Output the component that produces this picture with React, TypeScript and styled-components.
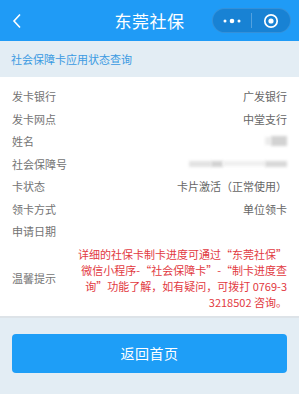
import React from 'react';
import styled, { createGlobalStyle } from 'styled-components';

const GlobalStyle = createGlobalStyle`
  html, body {
    margin: 0;
    padding: 0;
    background: #e3edf4;
    font-family: "Noto Sans CJK SC", "Noto Sans", sans-serif;
  }
`;

const Page = styled.div`
  width: 299px;
  min-height: 394px;
  background: #e3edf4;
`;

const NavBar = styled.div`
  height: 41px;
  background: #1f9bf6;
  display: grid;
  grid-template-columns: 1fr auto 1fr;
  align-items: center;
`;

const BackButton = styled.div`
  display: flex;
  align-items: center;
  padding-left: 12px;
`;

const NavTitle = styled.div`
  color: #fff;
  font-size: 17px;
  letter-spacing: 0.5px;
`;

const Capsule = styled.div`
  justify-self: end;
  margin-right: 8px;
  width: 79px;
  height: 25px;
  box-sizing: border-box;
  border-radius: 13px;
  background: rgba(0, 40, 90, 0.22);
  border: 1px solid rgba(255, 255, 255, 0.12);
  display: flex;
  align-items: center;
`;

const CapsuleHalf = styled.div`
  flex: 1;
  display: flex;
  align-items: center;
  justify-content: center;
`;

const CapsuleDivider = styled.div`
  width: 1px;
  height: 15px;
  background: rgba(255, 255, 255, 0.25);
`;

const SectionTitle = styled.div`
  height: 36px;
  display: flex;
  align-items: center;
  padding-left: 11px;
  color: #3a9ae2;
  font-size: 11px;
`;

const Card = styled.div`
  background: #fff;
  padding: 8px 12px 6px;
  border-bottom: 2px solid #dde3e8;
`;

const Row = styled.div<{ $tall?: boolean }>`
  display: flex;
  justify-content: space-between;
  align-items: center;
  min-height: 22.5px;
  padding-top: ${({ $tall }) => ($tall ? '3px' : '0')};
`;

const Label = styled.div`
  color: #737373;
  font-size: 11px;
  white-space: nowrap;
`;

const Value = styled.div`
  color: #666;
  font-size: 11px;
  text-align: right;
  white-space: nowrap;
`;

const Tip = styled.div`
  color: #e23a3f;
  font-size: 11px;
  line-height: 16px;
  text-align: right;
  white-space: nowrap;
`;

const Blur = styled.span<{ $w: number; $h: number; $shade: string }>`
  display: inline-block;
  width: ${({ $w }) => $w}px;
  height: ${({ $h }) => $h}px;
  background: ${({ $shade }) => $shade};
  filter: blur(1.5px);
`;

const BlurGroup = styled.div`
  display: flex;
  align-items: center;
`;

const HomeButton = styled.button`
  display: block;
  margin: 16px 12px 0;
  width: calc(100% - 24px);
  height: 39px;
  border: none;
  border-radius: 4px;
  background: #1e9ef7;
  color: #fff;
  font-family: inherit;
  font-size: 14px;
  letter-spacing: 0.5px;
`;

const rows: [string, React.ReactNode][] = [
  ['发卡银行', '广发银行'],
  ['发卡网点', '中堂支行'],
  [
    '姓名',
    <BlurGroup key="n">
      <Blur $w={6} $h={8} $shade="#ececec" />
      <Blur $w={16} $h={10} $shade="#d2d2d2" />
    </BlurGroup>,
  ],
  [
    '社会保障号',
    <BlurGroup key="s">
      <Blur $w={22} $h={6} $shade="#e2e2e2" />
      <Blur $w={12} $h={6} $shade="#d2d2d2" />
      <Blur $w={42} $h={5} $shade="#efefef" />
      <Blur $w={22} $h={6} $shade="#d8d8d8" />
    </BlurGroup>,
  ],
  ['卡状态', '卡片激活（正常使用）'],
  ['领卡方式', '单位领卡'],
  ['申请日期', ''],
];

const App = () => (
  <Page>
    <GlobalStyle />
    <NavBar>
      <BackButton>
        <svg width="10" height="16" viewBox="0 0 10 16">
          <path d="M8 1.5 L2 8 L8 14.5" stroke="#fff" strokeWidth="1.6" fill="none" />
        </svg>
      </BackButton>
      <NavTitle>东莞社保</NavTitle>
      <Capsule>
        <CapsuleHalf>
          <svg width="20" height="6" viewBox="0 0 20 6">
            <circle cx="3" cy="3" r="1.5" fill="#fff" />
            <circle cx="10" cy="3" r="2.3" fill="#fff" />
            <circle cx="17" cy="3" r="1.5" fill="#fff" />
          </svg>
        </CapsuleHalf>
        <CapsuleDivider />
        <CapsuleHalf>
          <svg width="16" height="16" viewBox="0 0 16 16">
            <circle cx="8" cy="8" r="6.2" stroke="#fff" strokeWidth="1.7" fill="none" />
            <circle cx="8" cy="8" r="2.6" fill="#fff" />
          </svg>
        </CapsuleHalf>
      </Capsule>
    </NavBar>
    <SectionTitle>社会保障卡应用状态查询</SectionTitle>
    <Card>
      {rows.map(([label, value]) => (
        <Row key={label}>
          <Label>{label}</Label>
          <Value>{value}</Value>
        </Row>
      ))}
      <Row $tall>
        <Label>温馨提示</Label>
        <Tip>
          详细的社保卡制卡进度可通过“东莞社保”
          <br />
          微信小程序-“社会保障卡”-“制卡进度查
          <br />
          询”功能了解，如有疑问，可拨打 0769-3
          <br />
          3218502 咨询。
        </Tip>
      </Row>
    </Card>
    <HomeButton>返回首页</HomeButton>
  </Page>
);

export default App;
